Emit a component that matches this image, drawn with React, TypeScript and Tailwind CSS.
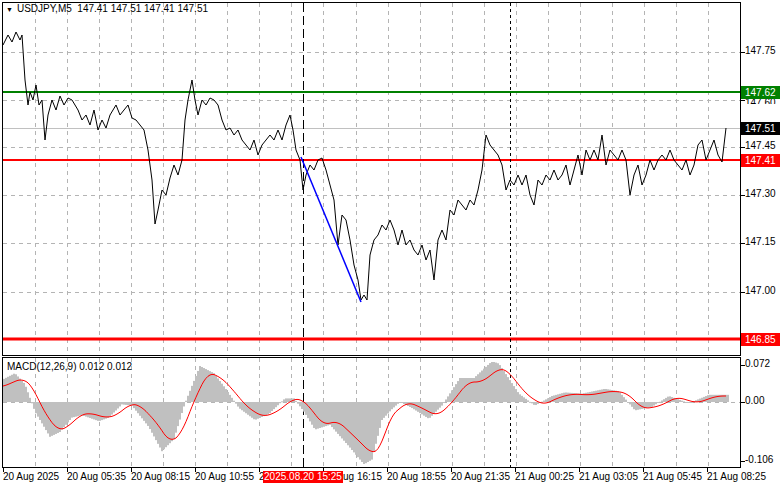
import React from "react";

const price: [number, number][] = [
[3,45],[8,35],[12,42],[16,32],[20,40],[22,35],[25,80],[28,105],[30,92],[33,100],[36,85],[39,105],[42,100],[45,140],[48,115],[52,100],[56,110],[60,96],[64,105],[68,98],[72,100],[78,110],[82,120],[86,115],[90,125],[94,110],[98,130],[102,120],[106,128],[110,115],[116,105],[120,115],[124,110],[128,105],[132,118],[136,120],[140,125],[144,130],[148,150],[152,180],[155,224],[158,210],[162,190],[166,195],[170,178],[174,165],[178,175],[182,160],[185,120],[188,100],[192,80],[195,100],[198,115],[202,100],[206,105],[210,98],[214,100],[218,105],[222,120],[226,130],[230,128],[234,135],[238,130],[242,140],[246,145],[250,150],[254,140],[258,155],[262,145],[266,140],[270,135],[274,140],[278,130],[282,140],[286,125],[290,115],[293,130],[296,150],[300,160],[303,190],[306,175],[310,165],[314,170],[318,160],[322,158],[326,170],[330,185],[334,200],[338,245],[342,215],[346,220],[350,240],[354,265],[358,280],[361,300],[364,295],[367,300],[370,255],[374,240],[378,235],[382,225],[386,230],[390,220],[394,230],[398,245],[402,230],[406,245],[410,240],[414,250],[418,255],[422,245],[426,260],[430,250],[434,280],[438,240],[442,230],[446,240],[450,210],[454,215],[458,200],[462,205],[466,210],[470,200],[474,205],[478,190],[482,170],[486,135],[490,145],[494,150],[498,155],[502,165],[506,190],[510,180],[514,185],[518,175],[522,185],[526,175],[530,195],[534,205],[538,180],[542,185],[546,175],[550,180],[554,170],[558,180],[562,175],[566,165],[570,185],[574,170],[578,155],[582,175],[586,150],[590,160],[594,150],[598,160],[602,135],[606,165],[610,150],[614,155],[618,160],[622,150],[626,160],[630,195],[634,175],[638,165],[642,185],[646,175],[650,160],[654,170],[658,160],[662,155],[666,160],[670,150],[674,160],[678,165],[682,170],[686,160],[690,175],[694,165],[698,145],[702,140],[706,160],[710,150],[714,140],[718,155],[722,162],[726,128]];

const sig: [number, number][] = [
[2,387],[23,378],[33,387],[43,410],[58,431],[68,427],[80,415],[90,413],[107,418],[117,415],[130,404],[140,405],[157,423],[170,443],[182,433],[193,403],[208,372],[222,378],[233,390],[247,407],[263,417],[277,412],[293,399],[302,399],[312,410],[323,425],[338,421],[357,439],[372,454],[380,450],[390,417],[400,408],[408,402],[420,407],[437,416],[450,405],[468,382],[482,382],[500,368],[507,370],[527,395],[543,405],[560,397],[573,394],[590,395],[613,391],[627,393],[643,409],[660,406],[677,397],[697,403],[717,396],[727,396]];

function interp(x: number) {
  if (x <= sig[0][0]) return sig[0][1];
  for (let i = 1; i < sig.length; i++) {
    if (x <= sig[i][0]) {
      const [x0, y0] = sig[i - 1], [x1, y1] = sig[i];
      return y0 + ((y1 - y0) * (x - x0)) / (x1 - x0);
    }
  }
  return sig[sig.length - 1][1];
}

const smooth: [number, number][] = [];
for (let x = 2; x <= 727; x += 2) {
  let s = 0;
  for (let k = -3; k <= 3; k++) s += interp(x + k * 2);
  smooth.push([x, s / 7]);
}

const vgrid = [35, 67, 99, 131, 163, 195, 227, 259, 291, 323, 356, 388, 420, 452, 484, 516, 548, 580, 612, 644, 676, 708];
const hgrid = [52, 100, 147, 195, 243, 292];

const bars: { x: number; y0: number; y1: number }[] = [];
for (let x = 3; x <= 728; x += 2) {
  const v = (interp(x + 9) - 402) * 1.2;
  const y = Math.max(362, Math.min(464, 402 + v));
  bars.push({ x, y0: Math.min(402, y), y1: Math.max(402, y) });
}

const pts = (a: [number, number][]) => a.map((p) => p.join(",")).join(" ");

const font = { fontFamily: "'Liberation Sans', Arial, sans-serif" };

const timeLabels: [number, string][] = [
  [3, "20 Aug 2025"], [67, "20 Aug 05:35"], [131, "20 Aug 08:15"], [195, "20 Aug 10:55"], [259, "20 Aug 13:35"],
  [323, "20 Aug 16:15"], [387, "20 Aug 18:55"], [451, "20 Aug 21:35"], [515, "21 Aug 00:25"], [579, "21 Aug 03:05"],
  [643, "21 Aug 05:45"], [707, "21 Aug 08:25"],
];

export default function App() {
  return (
    <div className="relative w-[781px] h-[489px] bg-white overflow-hidden text-[10px] text-black" style={font}>
      <svg width="781" height="489" className="absolute left-0 top-0">
        {vgrid.map((x) => (
          <line key={"v" + x} x1={x + 0.5} y1={3} x2={x + 0.5} y2={355} stroke="#b4b4b4" strokeDasharray="4 4" />
        ))}
        {hgrid.map((y) => (
          <line key={"h" + y} x1={3} y1={y + 0.5} x2={740} y2={y + 0.5} stroke="#b4b4b4" strokeDasharray="4 4" />
        ))}
        {vgrid.map((x) => (
          <line key={"mv" + x} x1={x + 0.5} y1={358} x2={x + 0.5} y2={467} stroke="#b4b4b4" strokeDasharray="4 4" />
        ))}
        <line x1={3} y1={402.5} x2={740} y2={402.5} stroke="#b4b4b4" strokeDasharray="4 4" />
        <line x1={3} y1={128.5} x2={740} y2={128.5} stroke="#c0c0c0" />
        <line x1={3} y1={92} x2={740} y2={92} stroke="#008000" strokeWidth={2} />
        <line x1={3} y1={160} x2={740} y2={160} stroke="#ff0000" strokeWidth={2} />
        <line x1={3} y1={339} x2={740} y2={339} stroke="#ff0000" strokeWidth={3} />
        <line x1={303.5} y1={3} x2={303.5} y2={467} stroke="#000" strokeDasharray="9 4" />
        <line x1={510.5} y1={3} x2={510.5} y2={467} stroke="#000" strokeDasharray="3 3" />
        <polyline points={pts(price)} fill="none" stroke="#000" strokeWidth={1} />
        <line x1={301} y1={157} x2={361} y2={302} stroke="#0000ff" strokeWidth={1.5} />
        {bars.map((b) => (
          <rect key={b.x} x={b.x} y={b.y0} width={2} height={Math.max(1, b.y1 - b.y0)} fill="#c0c0c0" />
        ))}
        <polyline points={pts(smooth)} fill="none" stroke="#ff0000" strokeWidth={1} />
        <rect x={2.5} y={2.5} width={738} height={353} fill="none" stroke="#000" />
        <rect x={2.5} y={357.5} width={738} height={110} fill="none" stroke="#000" />
        {[52, 100, 147, 195, 243, 292, 365, 402, 461].map((y) => (
          <line key={"t" + y} x1={741} y1={y + 0.5} x2={745} y2={y + 0.5} stroke="#000" />
        ))}
        {timeLabels.map(([x]) => (
          <line key={"bt" + x} x1={x + 0.5} y1={468} x2={x + 0.5} y2={472} stroke="#000" />
        ))}
      </svg>

      <div className="absolute left-[6px] top-[4px] flex items-center gap-[4px] leading-none">
        <span className="text-[7px]">▼</span>
        <span>USDJPY,M5&nbsp; 147.41 147.51 147.41 147.51</span>
      </div>
      <div className="absolute left-[7px] top-[362px] leading-none">MACD(12,26,9) 0.012 0.012</div>

      {[["147.75", 52], ["147.45", 147], ["147.30", 195], ["147.15", 243], ["147.00", 292], ["0.072", 365], ["0.00", 402], ["-0.106", 461]].map(([t, y]) => (
        <div key={t as string} className="absolute left-[745px] leading-none" style={{ top: (y as number) - 6 }}>
          {t}
        </div>
      ))}
      <div className="absolute left-[745px] top-[98px] h-[6px] overflow-hidden leading-none">
        <div className="-mt-[0px]">147.60</div>
      </div>
      {[["147.62", 92, "bg-[#008000]"], ["147.51", 128, "bg-black"], ["147.41", 160, "bg-[#ff0000]"], ["146.85", 339, "bg-[#ff0000]"]].map(([t, y, c]) => (
        <div
          key={t as string}
          className={`absolute left-[741px] w-[39px] h-[13px] leading-[13px] text-white pl-[4px] ${c}`}
          style={{ top: (y as number) - 6 }}
        >
          {t}
        </div>
      ))}

      {timeLabels.filter(([x]) => x !== 259).map(([x, t]) => (
        <div key={t} className="absolute top-[472px] leading-none whitespace-nowrap" style={{ left: x }}>
          {t}
        </div>
      ))}
      <div className="absolute left-[259px] top-[472px] leading-none">2</div>
      <div className="absolute left-[263px] top-[471px] h-[12px] w-[80px] leading-[12px] text-center bg-[#ff0000] text-white whitespace-nowrap">
        2025.08.20 15:25
      </div>
    </div>
  );
}
